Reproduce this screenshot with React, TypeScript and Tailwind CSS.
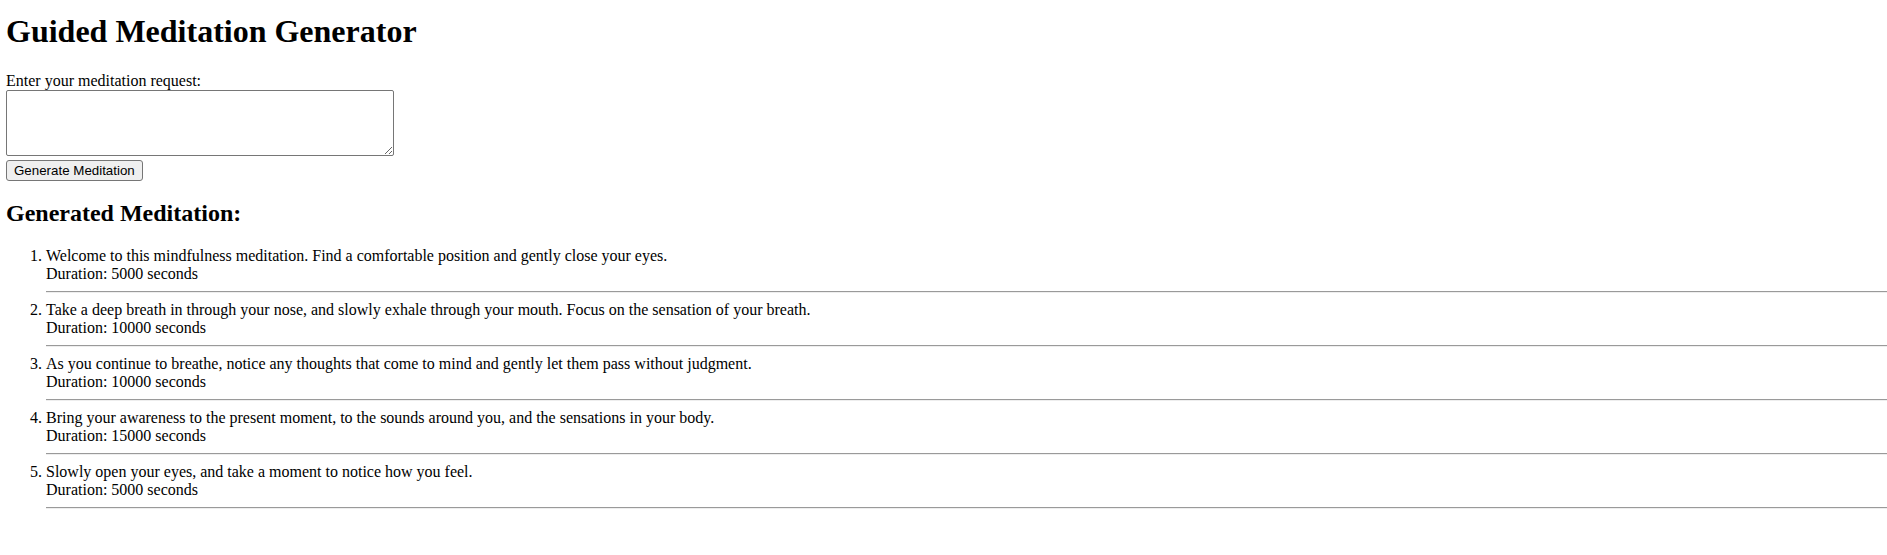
const steps = [
  { text: "Welcome to this mindfulness meditation. Find a comfortable position and gently close your eyes.", duration: 5000 },
  { text: "Take a deep breath in through your nose, and slowly exhale through your mouth. Focus on the sensation of your breath.", duration: 10000 },
  { text: "As you continue to breathe, notice any thoughts that come to mind and gently let them pass without judgment.", duration: 10000 },
  { text: "Bring your awareness to the present moment, to the sounds around you, and the sensations in your body.", duration: 15000 },
  { text: "Slowly open your eyes, and take a moment to notice how you feel.", duration: 5000 },
];

export default function App() {
  return (
    <div className="min-h-[555px] bg-white pl-[6px] text-[16px] leading-[18px] text-black [font-family:'Liberation_Serif',serif]">
      <h1 className="mt-[13px] mb-[22px] text-[32px] font-bold leading-[37px]">Guided Meditation Generator</h1>

      <div className="flex flex-col items-start">
        <label htmlFor="request">Enter your meditation request:</label>
        <textarea
          id="request"
          className="block h-[66px] w-[388px] rounded-[2px] border border-[#767676] bg-white px-[2px] py-[1px] text-[13.33px] [font-family:'Liberation_Mono',monospace]"
        />
        <button className="mt-[4px] h-[21px] rounded-[3px] border border-[#767676] bg-[#efefef] px-[7px] text-[13.33px] leading-[15px] text-black [font-family:'Liberation_Sans',sans-serif]">
          Generate Meditation
        </button>
      </div>

      <h2 className="mt-[19px] mb-[20px] text-[24px] font-bold leading-[27px]">Generated Meditation:</h2>

      <ol className="list-decimal pl-[40px]">
        {steps.map((s, i) => (
          <li key={i}>
            {s.text}
            <br />
            Duration: {s.duration} seconds
            <hr className="my-[8px] h-0 border-t border-b border-t-[#9a9a9a] border-b-[#eeeeee]" />
          </li>
        ))}
      </ol>
    </div>
  );
}
